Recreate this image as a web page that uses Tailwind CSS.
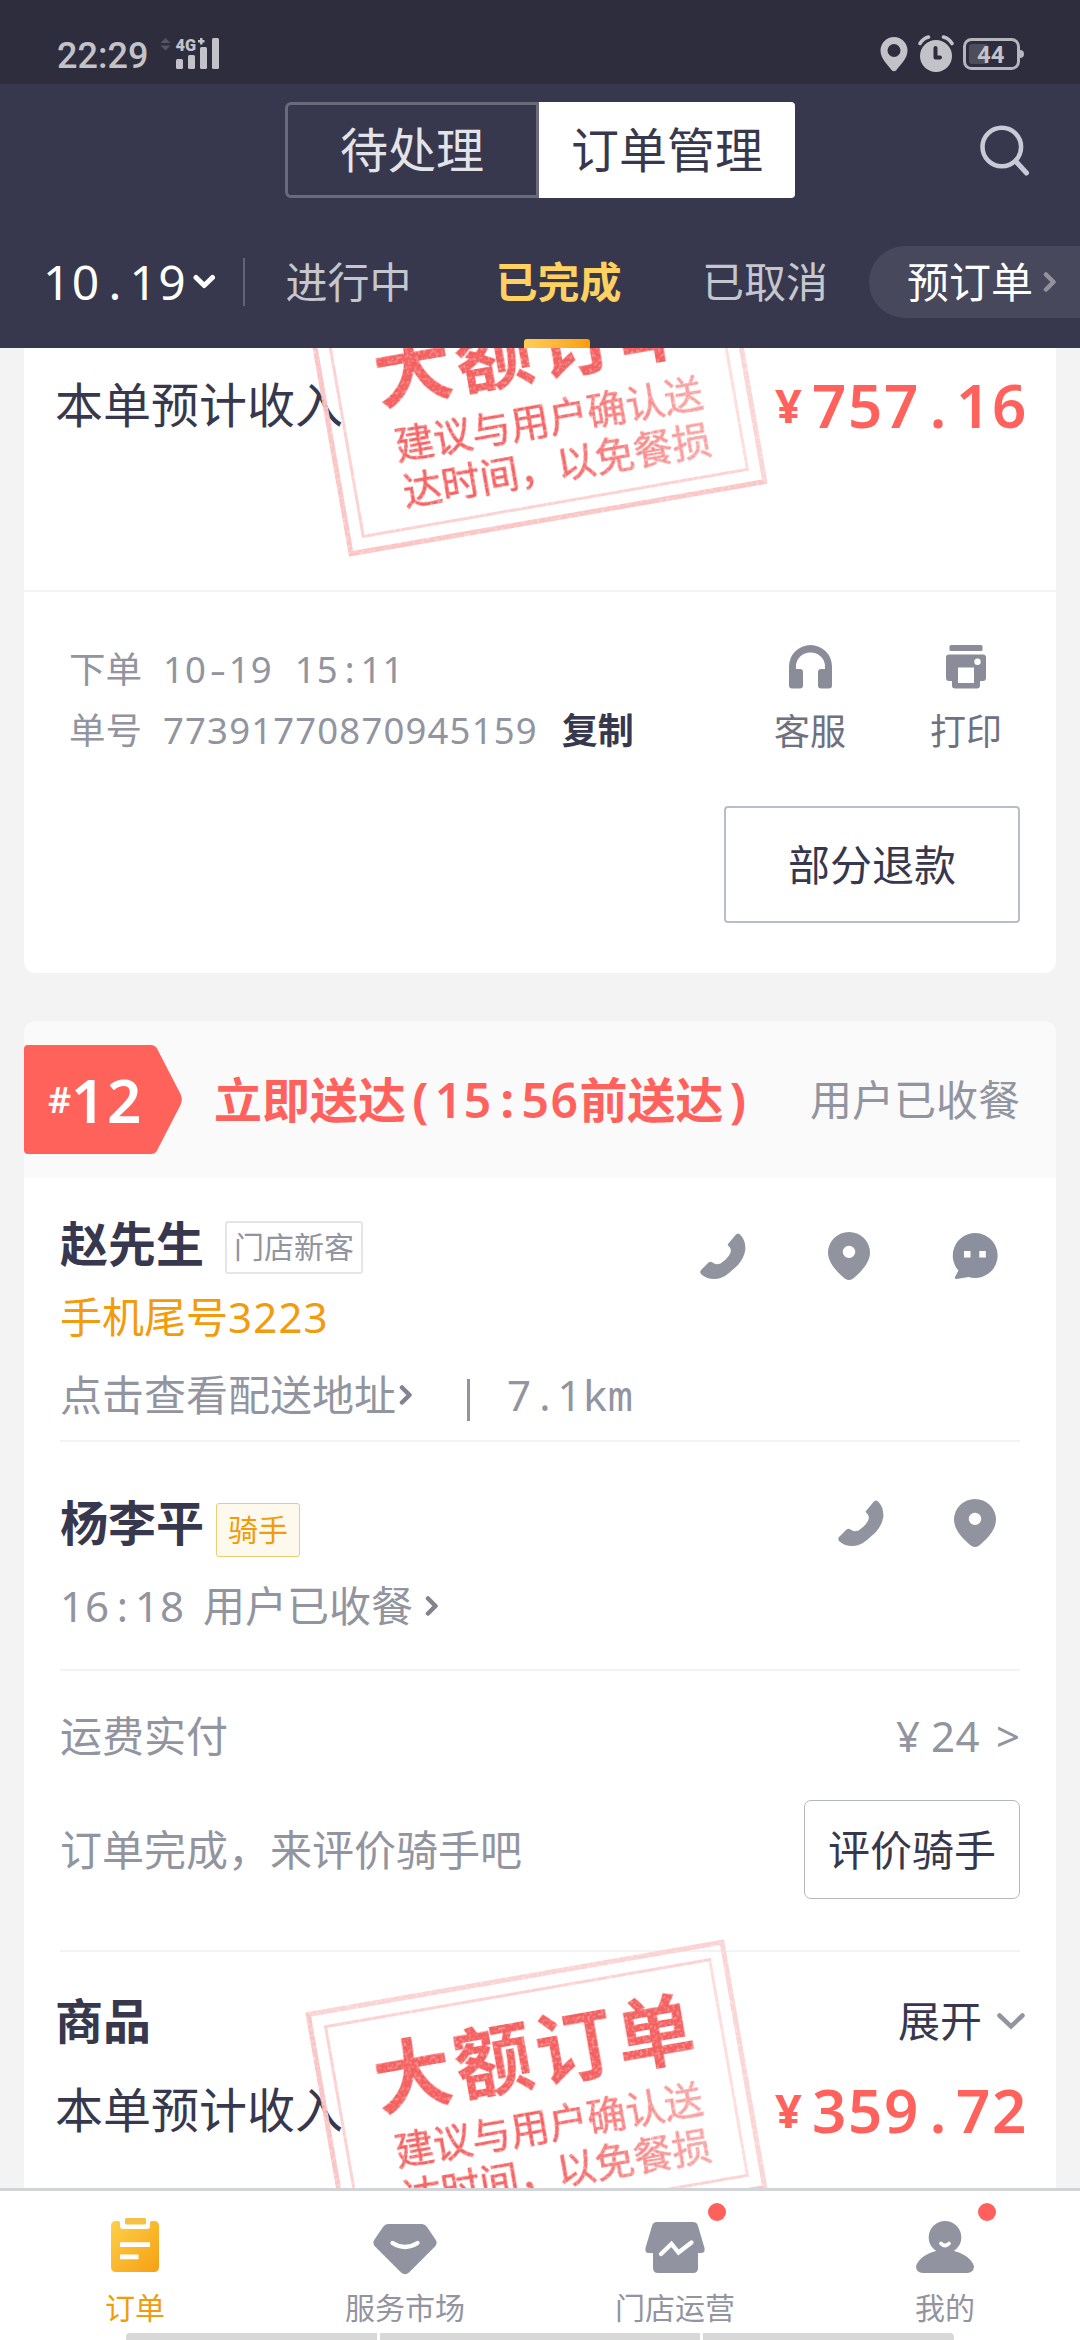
<!DOCTYPE html>
<html lang="zh-CN">
<head>
<meta charset="utf-8">
<meta name="viewport" content="width=device-width">
<title>订单管理</title>
<script src="https://cdn.jsdelivr.net/npm/@tailwindcss/browser@4"></script>
</head>
<body class="w-[1080px] h-[2340px] overflow-hidden flex flex-col bg-[#f3f3f3] text-[#37384d] leading-none font-['Noto_Sans','Noto_Sans_CJK_SC',sans-serif]">
<svg class="hidden">
  <symbol id="phone" viewBox="0 0 46 46"><path fill="#91939f" d="M28 11 35.5 2Q38-1 40.5 2 46 8 45.300 17 44 25 38 32L29 40Q22 46 14 46 7 46 1.500 41.500-1 39 1.500 36.500L8.500 29.500Q10.500 27.800 12.500 29.500 16 32.500 20.500 30.500 26 27 29 22.500 32.500 17.500 29.500 14 27 12 28 11Z"/></symbol>
  <symbol id="pin" viewBox="0 0 42 48"><path fill="#91939f" fill-rule="evenodd" d="M21 0A21 20.500 0 0 1 42 20.500C42 31 33 40 24.500 47Q21 49 17.500 47C9 40 0 31 0 20.500A21 20.500 0 0 1 21 0ZM21 13.700a6.200 6.200 0 1 0 0 12.400 6.200 6.200 0 0 0 0-12.400Z"/></symbol>
  <symbol id="right" viewBox="0 0 14 22"><path fill="none" stroke="currentColor" stroke-width="4.500" stroke-linecap="round" stroke-linejoin="round" d="M3 3.500 10.500 11 3 18.500"/></symbol>
</svg>
<svg width="0" height="0" class="absolute"><filter id="grain" x="0" y="0" width="100%" height="100%"><feTurbulence type="fractalNoise" baseFrequency="0.35" numOctaves="2" seed="4"/><feColorMatrix values="0 0 0 0 0  0 0 0 0 0  0 0 0 0 0  0 -1.300 0 0 1.620"/><feComposite in="SourceGraphic" operator="in"/></filter></svg>

<!-- status bar -->
<div class="h-[84px] shrink-0 bg-[#2d2d3e] flex items-end justify-between pl-[57px] pr-[56px] pb-[11px]">
  <div class="flex items-center h-[38px]">
    <span class="font-['Roboto'] font-medium text-[36px] text-[#c2c2c8] w-[103px] pt-[3px]">22:29</span>
    <svg width="60" height="34" viewBox="0 0 60 34" class="mb-[2px]">
      <path fill="#555563" d="M0.500 7 5.500 2l5 5ZM.5 9.500h10l-5 5Z"/>
      <g fill="#c2c2c8"><rect x="16" y="23" width="7" height="10" rx="1.500"/><rect x="28" y="19" width="7" height="14" rx="1.500"/><rect x="40" y="11" width="7" height="22" rx="1.500"/><rect x="52" y="2" width="7" height="31" rx="1.500"/>
      <text x="15.500" y="14.500" font-family="Roboto" font-weight="900" font-size="17" textLength="20.500" lengthAdjust="spacingAndGlyphs">4G</text><path d="M40 2h2.500v2h2v2.500h-2v2H40v-2h-2V4h2Z"/></g>
    </svg>
  </div>
  <div class="flex items-center gap-[9px] h-[38px]">
    <svg width="30" height="36" viewBox="0 0 30 36"><path fill="#c2c2c8" fill-rule="evenodd" d="M15 1A13.500 13.500 0 0 1 28.500 14.500C28.500 23 21 29 17.500 34Q15 36.500 12.500 34C9 29 1.500 23 1.500 14.500A13.500 13.500 0 0 1 15 1ZM15 8a6.500 6.500 0 1 0 0 13 6.500 6.500 0 0 0 0-13Z"/></svg>
    <svg width="36" height="38" viewBox="0 0 36 38"><circle cx="18" cy="21" r="16" fill="#c2c2c8"/><path d="M2 8.500Q5 3.500 10.500 2M34 8.500Q31 3.500 25.500 2" stroke="#c2c2c8" stroke-width="3.500" fill="none" stroke-linecap="round"/><path d="M17.500 13v9.500h4.500" stroke="#2d2d3e" stroke-width="4" fill="none" stroke-linejoin="round" stroke-linecap="round"/></svg>
    <svg width="61" height="34" viewBox="0 0 61 34"><rect x="1.500" y="2.500" width="54" height="29" rx="7" fill="none" stroke="#b5b5bc" stroke-width="3"/><path fill="#b5b5bc" d="M57 13q4 0 4 4t-4 4Z"/><rect x="6" y="7" width="19" height="20" rx="3" fill="#4d4d5b"/><text x="14" y="26" font-family="Roboto" font-weight="700" font-size="24" fill="#c2c2c8" textLength="27.500" lengthAdjust="spacingAndGlyphs">44</text></svg>
  </div>
</div>

<!-- header -->
<header class="h-[264px] shrink-0 bg-[#37384d] flex flex-col">
  <div class="h-[132px] pt-[18px] flex">
    <div class="ml-[285px] w-[510px] h-[96px] flex text-[48px]">
      <div class="w-[254px] border-[3px] border-[#696a7a] rounded-l-[6px] flex items-center justify-center text-[#e4e4e8]">待处理</div>
      <div class="flex-1 bg-white rounded-r-[4px] flex items-center justify-center">订单管理</div>
    </div>
    <svg class="ml-[183px] mt-[20px]" width="56" height="56" viewBox="0 0 56 56"><circle cx="23.800" cy="25" r="19.300" fill="none" stroke="#c8cbd6" stroke-width="4.500"/><path d="M38 39.500 48.500 51" stroke="#c8cbd6" stroke-width="5" stroke-linecap="round"/></svg>
  </div>
  <div class="h-[132px] relative flex items-center text-[42px] text-[#c5c6ce]">
    <div class="w-[243px] pl-[43px] flex items-center text-white text-[48px] tracking-[.028em]">10<span class="inline-block w-[.6em] text-center tracking-normal">.</span>19<svg class="ml-[5px]" width="24" height="18" viewBox="0 0 24 18"><path d="M4 4.500 12.200 12.500 20.500 4.500" fill="none" stroke="#fff" stroke-width="5" stroke-linecap="round" stroke-linejoin="round"/></svg></div>
    <div class="w-[2px] h-[48px] bg-[#626374]"></div>
    <div class="w-[207px] text-center">进行中</div>
    <div class="w-[213px] text-center text-[#ffd161] font-bold">已完成</div>
    <div class="w-[204px] pr-[4px] text-center">已取消</div>
    <div class="flex-1 h-[72px] bg-[#47485b] rounded-l-full text-white flex items-center pl-[38px]">预订单<svg class="ml-[10px] text-[#91929c]" width="14" height="22"><use href="#right"/></svg></div>
    <div class="absolute left-[524px] bottom-0 w-[66px] h-[9px] rounded-t-[3px] bg-linear-to-r from-[#ffce55] to-[#fa9d00]"></div>
  </div>
</header>

<main class="h-[1840px] shrink-0 overflow-hidden px-[24px] flex flex-col gap-[48px]">
  <!-- previous order -->
  <section class="h-[625px] shrink-0 bg-white rounded-b-[12px] flex flex-col">
    <div class="relative h-[244px] border-b-2 border-[#f3f3f3]">
      <div class="h-[114px] flex items-center justify-between pl-[31px] pr-[28px] text-[48px]">
        <span>本单预计收入</span>
        <span class="flex items-center text-[#ff625c] font-semibold text-[60px] tracking-[.028em]"><span class="text-[47px] w-[37px] font-bold tracking-normal">¥</span><span>757<span class="inline-block w-[.6em] text-center tracking-normal">.</span>16</span></span>
      </div>
      <div class="absolute left-[300px] top-[-80px] w-[425px] h-[254px] -rotate-[9.9deg] border-[5px] border-[#fbc4c4] border-t-[#fbd2d2] border-r-[#fbd4d4] [filter:url(#grain)] text-[#f45f5f]">
        <div class="absolute inset-[11px] border-[3px] border-[#fcd0d0] border-r-[#fddcdc]"></div>
        <div class="absolute inset-x-0 top-[35px] text-center pl-[15px] text-[78px] font-bold tracking-[4px]">大额订单</div>
        <div class="absolute inset-x-0 top-[123px] text-center pl-[16px] text-[39px] leading-[47px] [-webkit-text-stroke:0.6px_currentColor] [mask-image:linear-gradient(95deg,#000_50%,rgb(0_0_0/0.6)_85%)]">建议与用户确认送<br>达时间，以免餐损</div>
      </div>
    </div>
    <div class="flex pt-[47px] h-[214px] text-[36px]">
      <div class="pl-[45px] w-[680px] text-[#92949f] text-[36.500px]">
        <div class="h-[61px] flex items-center"><span class="w-[94px]">下单</span><span class="tracking-[.030em] whitespace-pre">10<span class="inline-block w-[.6em] text-center tracking-normal scale-x-140">-</span>19<span class="inline-block w-[.6em]"> </span>15<span class="inline-block w-[.6em] text-center tracking-normal">:</span>11</span></div>
        <div class="h-[61px] flex items-center"><span class="w-[94px]">单号</span><span class="tracking-[.032em]">77391770870945159</span><b class="ml-[24px] text-[36px] text-[#37384d]">复制</b></div>
      </div>
      <div class="w-[212px] text-center text-[#6f7080]">
        <svg class="mx-auto mt-[5.500px] mb-[25px]" width="43" height="44" viewBox="0 0 43 44"><path fill="#8b8c99" d="M0 21.500A21.500 21.500 0 0 1 43 21.500V40.500a3 3 0 0 1-3 3h-8a3 3 0 0 1-3-3V27a3 3 0 0 1 3-3h4v-2.500a14.500 14 0 0 0-29 0V24h4a3 3 0 0 1 3 3v13.500a3 3 0 0 1-3 3H3a3 3 0 0 1-3-3Z"/></svg>客服</div>
      <div class="w-[100px] text-center text-[#6f7080]">
        <svg class="mx-auto mt-[5.500px] mb-[25px]" width="40" height="44" viewBox="0 0 40 44"><g fill="#8b8c99"><rect x="3.500" width="33" height="6" rx="1.500"/><path fill-rule="evenodd" d="M3 9.500h34a3 3 0 0 1 3 3V33a3 3 0 0 1-3 3h-3v4.500a3 3 0 0 1-3 3H9a3 3 0 0 1-3-3V36H3a3 3 0 0 1-3-3V12.500a3 3 0 0 1 3-3ZM12 22.500v15.500h16V22.500ZM31.500 13.500a3.200 3.200 0 1 0 0 6.400 3.200 3.200 0 0 0 0-6.400Z"/></g></svg>打印</div>
    </div>
    <div class="self-end mr-[36px] w-[296px] h-[117px] border-2 border-[#b9bcca] rounded-[4px] flex items-center justify-center text-[42px]">部分退款</div>
  </section>

  <!-- order 12 -->
  <section class="h-[1400px] shrink-0 bg-white rounded-t-[12px] flex flex-col text-[42px] text-[#92949f]">
    <div class="h-[157px] bg-[#fafafa] rounded-t-[12px] flex items-center pr-[36px]">
      <div class="relative w-[158px] h-[109px]">
        <svg class="absolute inset-0" width="158" height="109" viewBox="0 0 158 109"><path fill="#ff615b" d="M4 0H127Q131 0 133 3.500L156.500 49Q159 54.500 156.500 60L133 105.500Q131 109 127 109H4Q0 109 0 105V4Q0 0 4 0Z"/></svg>
        <div class="relative h-full flex items-center pl-[24px] text-white font-semibold text-[60px] tracking-[.028em]"><span class="text-[36px] w-[23px] text-center tracking-normal">#</span>12</div>
      </div>
      <div class="ml-[32px] flex-1 text-[#ff625c] text-[48px] font-bold tracking-normal">立即送达<span class="inline-block w-[.6em] text-center">(</span><span class="tracking-[.032em] font-semibold">15</span><span class="inline-block w-[.6em] text-center">:</span><span class="tracking-[.032em] font-semibold">56</span>前送达<span class="inline-block w-[.6em] text-center">)</span></div>
      <div>用户已收餐</div>
    </div>
    <div class="relative mx-[36px] h-[264px] border-b-2 border-[#f3f3f3]">
      <div class="h-[97px] pt-[35px] flex items-center"><b class="text-[48px] leading-[54px] text-[#37384d]">赵先生</b><span class="ml-[21px] mt-[6px] w-[138px] h-[53px] border-2 border-[#e5e5e7] rounded-[3px] text-[30px] flex items-center justify-center">门店新客</span></div>
      <div class="h-[84px] flex items-center text-[#f29b0c]"><span>手机尾号</span><span class="tracking-[.028em]">3223</span></div>
      <div class="h-[72px] flex items-center"><span>点击查看配送地址</span><svg class="ml-[3px] text-[#82838f]" width="14" height="22"><use href="#right"/></svg><span class="ml-[54px] w-[3px] h-[42px] mt-[10px] bg-[#92949f]"></span><span class="ml-[37px] flex items-center tracking-[.028em]">7<span class="inline-block w-[.6em] text-center tracking-normal">.</span>1<span class="tracking-normal font-['Noto_Sans_Mono','Droid_Sans_Mono','Liberation_Mono',monospace]">km</span></span></div>
      <div class="absolute right-[22px] top-[54px] flex items-center gap-[82px]">
        <svg width="46" height="46"><use href="#phone"/></svg>
        <svg width="42" height="48"><use href="#pin"/></svg>
        <svg width="46" height="46" viewBox="0 0 46 46"><path fill="#8c909e" d="M23.500 0a22.500 22.500 0 1 1-7 44L4.500 46Q2.500 46 3 44L6.500 37.500A22.500 22.500 0 0 1 23.500 0Z"/><path fill="#fff" d="M12 18h6.500v6.500H12ZM27.300 18h6.500v6.500h-6.500Z"/></svg>
      </div>
    </div>
    <div class="relative mx-[36px] h-[229px] border-b-2 border-[#f3f3f3]">
      <div class="h-[122px] pt-[48px] flex items-start"><b class="text-[48px] leading-[66px] text-[#37384d]">杨李平</b><span class="ml-[12px] mt-[13px] w-[84px] h-[54px] border-[1.500px] border-[#eecb74] bg-[#fef9ed] rounded-[3px] text-[30px] text-[#f29b0c] flex items-center justify-center">骑手</span></div>
      <div class="h-[84px] flex items-center"><span class="tracking-[.022em]">16<span class="inline-block w-[.6em] text-center tracking-normal">:</span>18</span><span class="ml-[18px]">用户已收餐</span><svg class="ml-[12px] text-[#82838f]" width="14" height="22"><use href="#right"/></svg></div>
      <div class="absolute right-[24px] top-[57px] flex items-center gap-[70px]">
        <svg width="46" height="46"><use href="#phone"/></svg>
        <svg width="42" height="48"><use href="#pin"/></svg>
      </div>
    </div>
    <div class="mx-[36px] h-[281px] border-b-2 border-[#f3f3f3]">
      <div class="h-[129px] flex items-center justify-between"><span>运费实付</span><span class="flex"><span class="w-[35px]">¥</span><span class="tracking-[.01em]">24</span><span class="ml-[16px]">&gt;</span></span></div>
      <div class="h-[99px] flex items-center justify-between"><span>订单完成，来评价骑手吧</span><span class="w-[216px] h-[99px] border border-[#b5b7be] rounded-[7px] flex items-center justify-center text-[#37384d]">评价骑手</span></div>
    </div>
    <div class="relative text-[#37384d]">
      <div class="mt-[24px] h-[90px] flex items-center pl-[31px] pr-[30px]"><b class="flex-1 text-[48px]">商品</b><span>展开</span><svg class="ml-[14px]" width="30" height="22" viewBox="0 0 30 22"><path d="M3.500 5.500 15 16.500 26.500 5.500" fill="none" stroke="#92949f" stroke-width="4.500" stroke-linecap="round"/></svg></div>
      <div class="h-[88px] flex items-center justify-between pl-[31px] pr-[28px] text-[48px]">
        <span>本单预计收入</span>
        <span class="flex items-center text-[#ff625c] font-semibold text-[60px] tracking-[.028em]"><span class="text-[47px] w-[37px] font-bold tracking-normal">¥</span><span>359<span class="inline-block w-[.6em] text-center tracking-normal">.</span>72</span></span>
      </div>
      <div class="absolute left-[300px] top-[22px] w-[425px] h-[254px] -rotate-[9.9deg] border-[5px] border-[#fbc4c4] border-t-[#fbd2d2] border-r-[#fbd4d4] [filter:url(#grain)] text-[#f45f5f]">
        <div class="absolute inset-[11px] border-[3px] border-[#fcd0d0] border-r-[#fddcdc]"></div>
        <div class="absolute inset-x-0 top-[35px] text-center pl-[15px] text-[78px] font-bold tracking-[4px]">大额订单</div>
        <div class="absolute inset-x-0 top-[123px] text-center pl-[16px] text-[39px] leading-[47px] [-webkit-text-stroke:0.6px_currentColor] [mask-image:linear-gradient(95deg,#000_50%,rgb(0_0_0/0.6)_85%)]">建议与用户确认送<br>达时间，以免餐损</div>
      </div>
    </div>
  </section>
</main>

<!-- bottom navigation -->
<nav class="relative h-[152px] shrink-0 bg-white border-t-[3px] border-[#d3d4d8] grid grid-cols-4 text-[30px] text-[#92949f]">
  <div class="flex flex-col items-center pt-[27px] text-[#f29b0c]">
    <svg width="48" height="54" viewBox="0 0 48 54"><defs><linearGradient id="gold" x1="0" y1="0" x2="1" y2="1"><stop offset="0" stop-color="#fcd14a"/><stop offset="1" stop-color="#f79f12"/></linearGradient></defs><path fill="url(#gold)" d="M5 3H7.500Q9 3 9 5V8q0 3 3 3H36q3 0 3-3V5q0-2 1.500-2H43q5 0 5 5V49q0 5-5 5H5q-5 0-5-5V8Q0 3 5 3Z"/><rect x="14" width="21" height="6.500" rx="1.500" fill="#f5c044"/><path d="M9 24.300h30v4.800H9ZM9 36.500h18.500v4.800H9Z" fill="#fff"/></svg>
    <span class="mt-[21px]">订单</span>
  </div>
  <div class="flex flex-col items-center pt-[27px]">
    <svg width="64" height="54" viewBox="0 -6 64 54" class="overflow-visible"><path fill="#9194a0" d="M15 0H49Q52 0 54 3L62.500 15.500Q65 19 62 22.500L36 48.500Q32 52 28 48.500L2 22.500Q-1 19 1.500 15.500L10 3Q12 0 15 0Z"/><path d="M19.500 19Q32 27 44.500 19" fill="none" stroke="#fff" stroke-width="4.300" stroke-linecap="round"/></svg>
    <span class="mt-[21px]">服务市场</span>
  </div>
  <div class="relative flex flex-col items-center pt-[27px]">
    <svg width="60" height="54" viewBox="0 -4 60 54" class="overflow-visible"><path fill="#9194a0" d="M12 0H48Q52 0 53 4L59.500 26Q60.500 31 56 31H53V46Q53 51 48 51H13Q8 51 8 46V31H4Q-.5 31 .5 26L7 4Q8 0 12 0Z"/><path d="M16 32 26.500 22 33.500 30.500 46.500 20.500" fill="none" stroke="#fff" stroke-width="4.300" stroke-linecap="round"/></svg>
    <span class="mt-[21px]">门店运营</span>
    <i class="absolute left-[168px] top-[12px] size-[18px] rounded-full bg-[#ff605b]"></i>
  </div>
  <div class="relative flex flex-col items-center pt-[27px]">
    <svg width="58" height="54" viewBox="0 -3 58 54" class="overflow-visible"><g fill="#9194a0"><circle cx="29" cy="16.300" r="16.300"/><path d="M0 45C3 36 15 29 29 29S55 36 58 45Q58 52 51 52H7Q0 52 0 45Z"/></g><path d="M25 22.500Q29 26.500 33 22.500" fill="none" stroke="#fff" stroke-width="3.800" stroke-linecap="round"/></svg>
    <span class="mt-[21px]">我的</span>
    <i class="absolute left-[168px] top-[12px] size-[18px] rounded-full bg-[#ff605b]"></i>
  </div>
  <div class="absolute left-[126px] bottom-0 w-[828px] h-[7px] rounded-t-[4px] overflow-hidden flex gap-[3px]"><i class="w-[251px] bg-[#d8d8d8]"></i><i class="w-[320px] bg-[#d8d8d8]"></i><i class="flex-1 bg-[#d8d8d8]"></i></div>
</nav>
</body>
</html>
